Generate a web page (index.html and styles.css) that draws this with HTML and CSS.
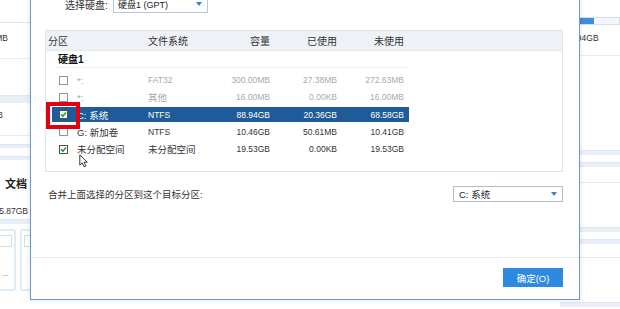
FILE: index.html
```html
<!DOCTYPE html>
<html>
<head>
    <meta charset="utf-8">
    <title>合并分区</title>
    <link rel="stylesheet" href="styles.css">
</head>
<body>
    <div class="app">
        <!-- Left partition list of the main window -->
        <div class="side side-left">
            <div class="pl-row pl-first"><span class="pl-size pl-size-a">16.00MB</span></div>
            <div class="band band-a"></div>
            <div class="pl-row"><span class="pl-size pl-size-b">19.53GB</span></div>
            <div class="band band-b"></div>
            <div class="band band-c"></div>
            <div class="pl-title">文档</div>
            <div class="pl-sub"><span>45.87GB</span></div>
            <div class="band band-d"></div>
            <div class="tiles">
                <div class="tile">
                    <div class="tile-box"></div>
                    <div class="tile-more">...</div>
                </div>
                <div class="tile">
                    <div class="tile-box"></div>
                </div>
            </div>
        </div>

        <!-- Right disk list of the main window -->
        <div class="side side-right">
            <div class="progress"><div class="progress-fill"></div></div>
            <div class="pr-row">88.94GB</div>
            <div class="band band-e"></div>
            <div class="band band-f"></div>
            <div class="line line-g"></div>
            <div class="band band-h"></div>
            <div class="band band-i"></div>
            <div class="line line-j"></div>
            <div class="band band-k"></div>
        </div>

        <!-- Merge dialog -->
        <div class="dialog">
            <div class="dialog-body">
                <div class="disk-row">
                    <span class="disk-label">选择硬盘:</span>
                    <div class="select select-disk">
                        <span>硬盘1 (GPT)</span>
                        <span class="arrow"></span>
                    </div>
                </div>

                <div class="table">
                    <div class="thead">
                        <span class="th th-first">分区</span>
                        <span class="th th-fs">文件系统</span>
                        <span class="th th-num">容量</span>
                        <span class="th th-num">已使用</span>
                        <span class="th th-num">未使用</span>
                        <span class="th"></span>
                    </div>
                    <div class="group">硬盘1</div>
                    <div class="rows">
                        <div class="row muted">
                            <span class="cell"><span class="check"></span></span>
                            <span class="cell name">*:</span>
                            <span class="cell fs">FAT32</span>
                            <span class="cell num">300.00MB</span>
                            <span class="cell num">27.38MB</span>
                            <span class="cell num">272.63MB</span>
                        </div>
                        <div class="row muted">
                            <span class="cell"><span class="check"></span></span>
                            <span class="cell name">*:</span>
                            <span class="cell fs cjk">其他</span>
                            <span class="cell num">16.00MB</span>
                            <span class="cell num">0.00KB</span>
                            <span class="cell num">16.00MB</span>
                        </div>
                        <div class="row selected">
                            <span class="cell"><span class="check on"><svg viewBox="0 0 9 9"><path d="M1.4 4.3 L3.6 6.7 L7.7 1.8"/></svg></span></span>
                            <span class="cell name">C: 系统</span>
                            <span class="cell fs">NTFS</span>
                            <span class="cell num">88.94GB</span>
                            <span class="cell num">20.36GB</span>
                            <span class="cell num">68.58GB</span>
                        </div>
                        <div class="row">
                            <span class="cell"><span class="check"></span></span>
                            <span class="cell name">G: 新加卷</span>
                            <span class="cell fs">NTFS</span>
                            <span class="cell num">10.46GB</span>
                            <span class="cell num">50.61MB</span>
                            <span class="cell num">10.41GB</span>
                        </div>
                        <div class="row">
                            <span class="cell"><span class="check on"><svg viewBox="0 0 9 9"><path d="M1.4 4.3 L3.6 6.7 L7.7 1.8"/></svg></span></span>
                            <span class="cell name">未分配空间</span>
                            <span class="cell fs cjk">未分配空间</span>
                            <span class="cell num">19.53GB</span>
                            <span class="cell num">0.00KB</span>
                            <span class="cell num">19.53GB</span>
                        </div>
                    </div>
                </div>

                <div class="target-row">
                    <span class="target-label">合并上面选择的分区到这个目标分区:</span>
                    <div class="select select-target">
                        <span>C: 系统</span>
                        <span class="arrow"></span>
                    </div>
                </div>
            </div>
            <div class="dialog-footer">
                <button class="ok-button">确定(O)</button>
            </div>
        </div>

        <!-- Annotation and mouse pointer over the dialog -->
        <div class="mark"></div>
        <svg class="cursor" viewBox="0 0 10 14">
            <path d="M0.8 0.8 L0.8 11.2 L3.2 8.9 L5.1 12.8 L6.9 12 L5 8.2 L8.3 8.2 Z"/>
        </svg>
    </div>
</body>
</html>
```

FILE: styles.css
```css
body {
    margin: 0;
    font-family: "Liberation Sans", "Noto Sans CJK SC", sans-serif;
    font-size: 9.5px;
    color: #333;
    background-color: #fff;
    overflow: hidden;
}
.app {
    position: relative;
    display: flex;
    justify-content: space-between;
    width: 620px;
    height: 309px;
    overflow: hidden;
}

/* main window behind the dialog */
.side {
    width: 60px;
    display: flex;
    flex-direction: column;
    overflow: hidden;
}
.pl-row {
    display: flex;
    justify-content: flex-end;
    align-items: flex-start;
    height: 32px;
    border-bottom: 1px solid #e6ecf3;
    font-size: 8.5px;
    line-height: 12px;
    white-space: nowrap;
}
.pl-first {
    margin-top: 22px;
    height: 35px;
    border-top: 1px solid #dde6f0;
}
.pl-size-a { padding: 9px 52px 0 0; }
.pl-size-b { padding: 6px 57px 0 0; }
.band {
    background-color: #e8eff8;
    border-top: 1px solid #dfe8f2;
}
.band-a { margin-top: 36px; height: 7px; }
.band-b { margin-top: 8px; height: 3px; }
.band-c { margin-top: 8px; height: 3px; }
.pl-title {
    padding: 17px 33px 0 0;
    font-size: 11px;
    font-weight: bold;
    line-height: 14px;
    text-align: right;
    color: #222;
}
.pl-sub {
    display: flex;
    justify-content: flex-end;
    margin-top: 14px;
    padding-right: 32px;
    font-size: 8.5px;
    line-height: 12px;
    white-space: nowrap;
}
.band-d { margin-top: 2px; height: 4px; }
.tiles {
    display: flex;
    gap: 4px;
    margin: 5px 0 0 -24px;
}
.tile {
    width: 36px;
    height: 58px;
    border: 2px solid #e1ebf6;
    border-radius: 2px;
}
.tile-box {
    width: 30px;
    height: 10px;
    margin: 4px 0 0 2px;
    border: 1px solid #cfe3d2;
}
.tile-more {
    margin: 22px 0 0 24px;
    font-size: 8px;
    color: #666;
}
.progress {
    margin-top: 17px;
    height: 6px;
    border: 1px solid #d3deeb;
    background-color: #f3f6fa;
}
.progress-fill {
    width: 33px;
    height: 6px;
    background-color: #3b8ee6;
}
.pr-row {
    height: 23px;
    padding: 7px 0 0 5px;
    font-size: 8.5px;
    line-height: 12px;
    white-space: nowrap;
    border-bottom: 1px solid #e6ecf3;
}
.band-e { margin-top: 94px; height: 4px; }
.band-f { margin-top: 7px; height: 4px; }
.line {
    height: 1px;
    background-color: #dfeee3;
}
.line-g { margin-top: 15px; }
.band-h { margin-top: 44px; height: 4px; }
.band-i { margin-top: 7px; height: 4px; }
.line-j { margin-top: 13px; }
.band-k { margin-top: 44px; height: 4px; }

/* dialog */
.dialog {
    position: absolute;
    left: 30px;
    top: -20px;
    width: 550px;
    height: 320px;
    box-sizing: border-box;
    border: 1px solid #6b98cc;
    background-color: #fff;
    box-shadow: 0 0 5px rgba(0,0,0,0.12);
    display: flex;
    flex-direction: column;
}
.dialog-body {
    flex: 1;
    padding: 14px 16px 0 14px;
}
.disk-row {
    display: flex;
    align-items: center;
    height: 18px;
    padding-left: 20px;
}
.disk-label {
    width: 48px;
    font-size: 10px;
}
.select {
    box-sizing: border-box;
    display: flex;
    align-items: center;
    justify-content: space-between;
    border: 1px solid #b4c7dd;
    background-color: #fff;
    font-size: 9px;
    color: #222;
}
.select-disk {
    width: 95px;
    height: 18px;
    padding: 0 5px 0 4px;
}
.arrow {
    width: 0;
    height: 0;
    border-left: 3px solid transparent;
    border-right: 3px solid transparent;
    border-top: 4px solid #3f7fc6;
}

.table {
    margin-top: 17px;
    height: 142px;
    box-sizing: border-box;
    border: 1px solid #dde4ec;
}
.thead {
    display: grid;
    grid-template-columns: 95px 69px 65px 67px 67px 1fr;
    height: 19px;
    align-items: center;
    background-color: #eef2f7;
    border-bottom: 1px solid #e2e8ef;
    font-size: 10px;
    color: #333;
}
.th-first { padding-left: 2px; }
.th-fs { padding-left: 7px; }
.th-num {
    text-align: right;
    padding-right: 5px;
}
.group {
    margin: 0 0 0 9px;
    width: 354px;
    height: 17px;
    padding-left: 3px;
    box-sizing: border-box;
    border-bottom: 1px solid #eceff3;
    font-size: 10px;
    font-weight: bold;
    line-height: 17px;
    color: #111;
}
.rows {
    display: flex;
    flex-direction: column;
    gap: 2.25px;
    margin: 4.5px 0 0 6px;
    width: 357px;
}
.row {
    display: grid;
    grid-template-columns: 25px 64px 69px 65px 67px 67px;
    height: 15px;
    align-items: center;
    white-space: nowrap;
}
.row.muted { color: #a9a9a9; }
.row.selected {
    background-color: #1f5b98;
    color: #fff;
}
.cell { display: flex; align-items: center; }
.name { font-size: 9.5px; }
.fs {
    padding-left: 7px;
    font-size: 8.5px;
}
.fs.cjk { font-size: 9.5px; }
.num {
    justify-content: flex-end;
    padding-right: 5px;
    font-size: 8.5px;
}
.check {
    width: 9px;
    height: 9px;
    margin-left: 7px;
    box-sizing: border-box;
    border: 1px solid #8e949b;
    background-color: #fff;
}
.check.on { border-color: #4a4f55; }
.check svg {
    display: block;
    width: 7px;
    height: 7px;
}
.check svg path {
    fill: none;
    stroke: #22a02a;
    stroke-width: 2;
}

.target-row {
    display: flex;
    align-items: center;
    justify-content: space-between;
    height: 16px;
    margin-top: 14px;
    padding-left: 3px;
}
.target-label { font-size: 9.5px; }
.select-target {
    width: 110px;
    height: 16px;
    padding: 0 5px 0 5px;
    border-color: #a9bdd5;
    font-size: 9.5px;
}

.dialog-footer {
    height: 42px;
    box-sizing: border-box;
    border-top: 1px solid #e6e9ee;
    display: flex;
    justify-content: flex-end;
    align-items: flex-start;
    padding: 10px 16px 0 0;
}
.ok-button {
    width: 60px;
    height: 19px;
    padding: 0;
    border: none;
    background-color: #2e8ae0;
    color: #fff;
    font-family: "Liberation Sans", "Noto Sans CJK SC", sans-serif;
    font-size: 9.5px;
}

/* overlays */
.mark {
    position: absolute;
    left: 46px;
    top: 102px;
    width: 34px;
    height: 27px;
    box-sizing: border-box;
    border: 4px solid #e3000f;
}
.cursor {
    position: absolute;
    left: 79px;
    top: 154px;
    width: 10px;
    height: 14px;
}
.cursor path {
    fill: #fff;
    stroke: #222;
    stroke-width: 0.9;
}
```
